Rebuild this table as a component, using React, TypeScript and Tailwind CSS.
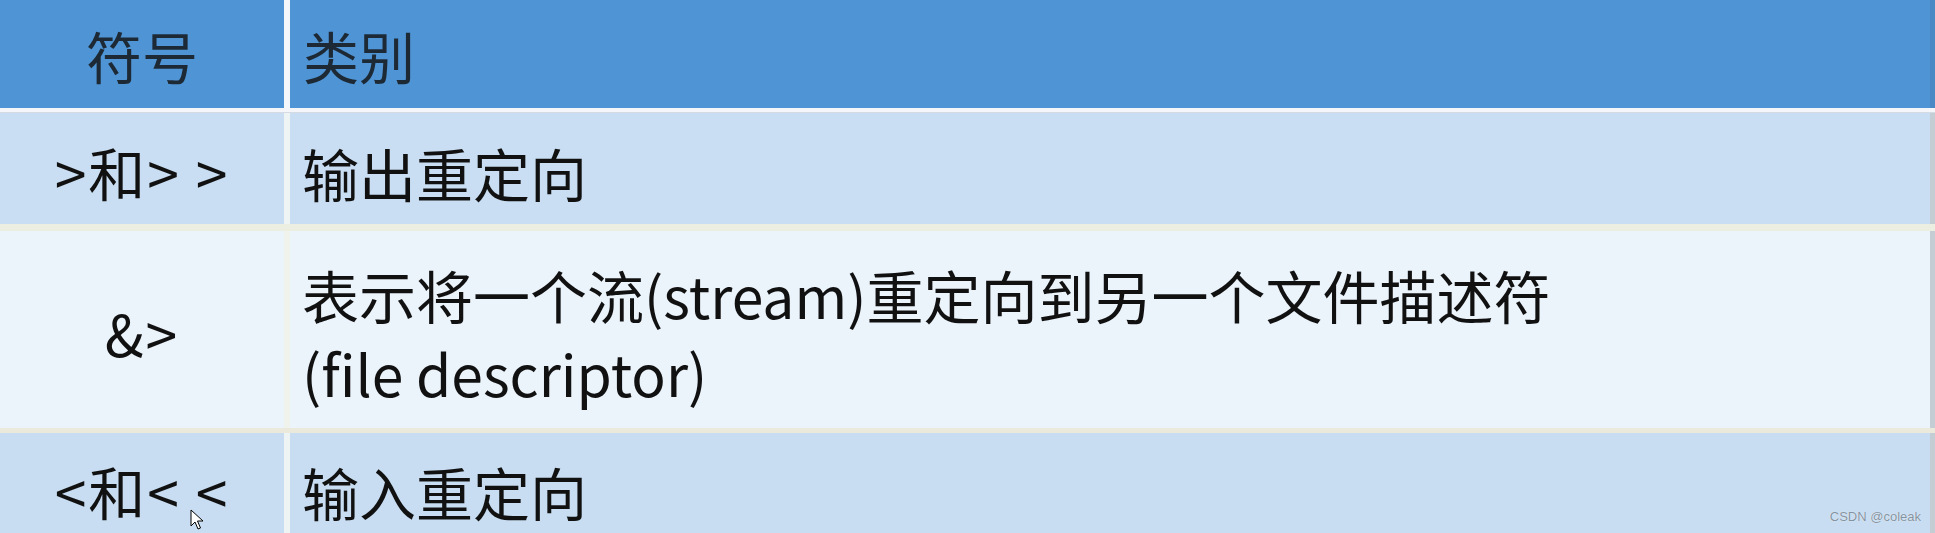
import React from "react";

const font = { fontFamily: '"Noto Sans CJK SC", "Liberation Sans", sans-serif' };

type Row = {
  symbol: string;
  lines: string[];
  height: string;
  bg: string;
  gap: string;
};

const rows: Row[] = [
  { symbol: ">和> >", lines: ["输出重定向"], height: "h-[111px]", bg: "bg-[#c9def2]", gap: "bg-[#eef3f4]" },
  {
    symbol: "&>",
    lines: ["表示将一个流(stream)重定向到另一个文件描述符", "(file descriptor)"],
    height: "h-[197px]",
    bg: "bg-[#ebf3fb]",
    gap: "bg-[#f0f2ec]",
  },
  { symbol: "<和< <", lines: ["输入重定向"], height: "h-[110px]", bg: "bg-[#c8ddf1]", gap: "bg-[#eef3f4]" },
];

const separators = ["h-[5px] bg-[#f4f6f9] border-b border-[#d4dbe2]", "h-[7px] bg-[#eceee2]", "h-[5px] bg-[#ebe8dc]"];

function Cursor() {
  return (
    <svg className="absolute left-[190px] top-[509px]" width="14" height="22" viewBox="0 0 14 22">
      <path d="M1 1 L1 17 L5 13 L8 20 L10.5 19 L7.5 12 L13 12 Z" fill="#fff" stroke="#000" strokeWidth="1" strokeLinejoin="round" />
    </svg>
  );
}

export default function App() {
  return (
    <div className="relative w-[1935px] h-[533px] overflow-hidden bg-[#f3f6f9] text-[#111]" style={font}>
      {/* header */}
      <div className="flex h-[108px] bg-[#4f94d4] text-[#1d2935] text-[56px]">
        <div className="w-[284px] flex items-center justify-center pt-[2px]">符号</div>
        <div className="w-[6px] bg-[#f5f8fb]" />
        <div className="flex-1 flex items-center pl-[13px] pt-[2px]">类别</div>
        <div className="w-[5px] bg-[#4a89c6]" />
      </div>

      {rows.map((row, i) => (
        <React.Fragment key={row.symbol}>
          <div className={separators[i]} />
          <div className={`flex ${row.height} ${row.bg} text-[57px]`}>
            <div className="w-[284px] flex items-center justify-center pt-[6px] tracking-[2px]">{row.symbol}</div>
            <div className={`w-[6px] ${row.gap}`} />
            <div className="flex-1 flex flex-col justify-center pl-[12px] pt-[6px] leading-[78px]">
              {row.lines.map((line) => (
                <div key={line} className="whitespace-nowrap">{line}</div>
              ))}
            </div>
            <div className="w-[5px] bg-[#c4ccd4]" />
          </div>
        </React.Fragment>
      ))}

      <div
        className="absolute right-[14px] bottom-[7px] text-[13px] text-[#8393a1]"
        style={{ fontFamily: '"Liberation Sans", Arial, sans-serif', textShadow: "0 0 1px #fff" }}
      >
        CSDN @coleak
      </div>
      <Cursor />
    </div>
  );
}
